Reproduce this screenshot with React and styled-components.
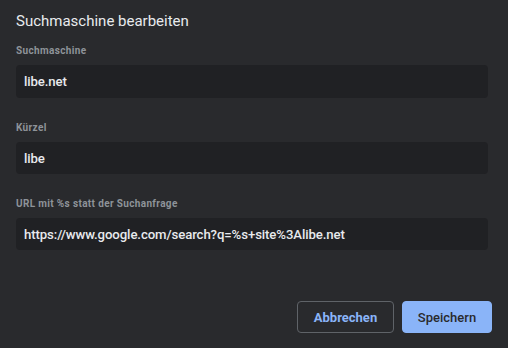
import React from 'react';
import styled, { createGlobalStyle } from 'styled-components';

const GlobalStyle = createGlobalStyle`
  html, body {
    margin: 0;
    padding: 0;
    background: #292a2d;
  }
  body {
    font-family: Roboto, "Liberation Sans", Arial, sans-serif;
  }
`;

const Dialog = styled.div`
  width: 508px;
  height: 348px;
  box-sizing: border-box;
  background: #292a2d;
  padding: 12px 20px 15px 16px;
  display: flex;
  flex-direction: column;
`;

const Title = styled.h1`
  margin: 0;
  font-size: 15px;
  font-weight: 400;
  color: #e8eaed;
  line-height: 18px;
`;

const Fields = styled.div`
  display: flex;
  flex-direction: column;
  gap: 24px;
  margin-top: 15px;
`;

const Field = styled.label`
  display: flex;
  flex-direction: column;
  gap: 8px;
`;

const Label = styled.span`
  font-size: 10px;
  font-weight: 700;
  color: #8e9399;
  line-height: 12px;
  letter-spacing: 0.35px;
`;

const Input = styled.input`
  box-sizing: border-box;
  width: 472px;
  height: ${p => p.$h || 33}px;
  border: none;
  outline: none;
  border-radius: 4px;
  background: #202124;
  color: #e8eaed;
  font-family: Roboto, "Liberation Sans", Arial, sans-serif;
  font-size: 13.2px;
  font-weight: 500;
  letter-spacing: -0.1px;
  padding: 0 8px;
`;

const Footer = styled.div`
  margin-top: auto;
  display: flex;
  justify-content: flex-end;
  gap: 8px;
  margin-right: -4px;
`;

const Button = styled.button`
  box-sizing: border-box;
  height: 32px;
  padding: 0;
  border-radius: 4px;
  font-family: Roboto, "Liberation Sans", Arial, sans-serif;
  font-size: 13px;
  font-weight: ${p => (p.$primary ? 500 : 700)};
  cursor: pointer;
  border: 1px solid ${p => (p.$primary ? '#8ab4f8' : '#5f6368')};
  background: ${p => (p.$primary ? '#8ab4f8' : 'transparent')};
  color: ${p => (p.$primary ? '#292a2d' : '#8ab4f8')};
  width: ${p => p.$w}px;
`;

export default function App() {
  return (
    <>
      <GlobalStyle />
      <Dialog>
        <Title>Suchmaschine bearbeiten</Title>
        <Fields>
          <Field>
            <Label>Suchmaschine</Label>
            <Input defaultValue="libe.net" />
          </Field>
          <Field>
            <Label>Kürzel</Label>
            <Input defaultValue="libe" $h={32} />
          </Field>
          <Field>
            <Label>URL mit %s statt der Suchanfrage</Label>
            <Input defaultValue="https://www.google.com/search?q=%s+site%3Alibe.net" $h={32} />
          </Field>
        </Fields>
        <Footer>
          <Button $w={97}>Abbrechen</Button>
          <Button $primary $w={90}>Speichern</Button>
        </Footer>
      </Dialog>
    </>
  );
}
